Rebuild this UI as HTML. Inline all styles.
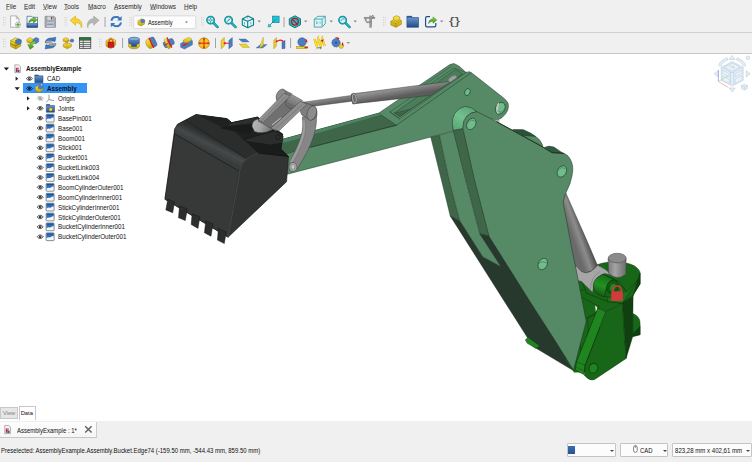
<!DOCTYPE html>
<html lang="en">
<head>
<meta charset="utf-8">
<title>AssemblyExample - FreeCAD</title>
<style>
html,body{margin:0;padding:0;}
body{width:752px;height:462px;overflow:hidden;background:#fff;position:relative;font-family:"Liberation Sans",sans-serif;font-size:7px;color:#111;-webkit-font-smoothing:antialiased;}
.abs{position:absolute;}
#chrome{left:0;top:0;width:752px;height:54px;background:#f0f0f0;}
#menubar span{background:linear-gradient(#707070,#707070) 0 7.9px no-repeat;position:absolute;top:1.6px;line-height:9px;font-size:7px;color:#262626;white-space:nowrap;transform:scaleX(0.915);transform-origin:0 50%;}

.hline{position:absolute;left:0;width:752px;height:1px;background:#d0d0d0;}
.grip{position:absolute;width:2px;height:12px;background-image:radial-gradient(circle,#bdbdbd 0.5px,transparent 0.7px);background-size:2px 2px;}
.vsep{position:absolute;width:1px;height:12px;background:#8c8c8c;}
.dd{position:absolute;width:0;height:0;border-left:2px solid transparent;border-right:2px solid transparent;border-top:2px solid #777;}
#tree .row{position:absolute;left:0;height:10px;line-height:10px;font-size:7px;white-space:nowrap;color:#111;}
#tree .row span{position:absolute;top:0.6px;}
#tree .tn{font-style:normal;display:inline-block;font-size:7.1px;transform:scaleX(0.885);transform-origin:0 50%;}
#tree .tb{font-weight:bold;display:inline-block;font-size:7.1px;transform:scaleX(0.885);transform-origin:0 50%;}
.tri-r{position:absolute;width:0;height:0;border-top:2px solid transparent;border-bottom:2px solid transparent;border-left:3px solid #222;}
.tri-d{position:absolute;width:0;height:0;border-left:2px solid transparent;border-right:2px solid transparent;border-top:3px solid #222;}
#bottom{left:0;top:421px;width:752px;height:41px;background:#f0f0f0;}
.sbox{position:absolute;top:443px;height:14px;background:#fcfcfc;border:0.5px solid #c4c4c4;border-radius:1px;box-sizing:border-box;}
</style>
</head>
<body>
<!-- ===== top chrome ===== -->
<div id="chrome" class="abs">
  <div id="menubar">
    <span style="left:5.5px;background-size:4.28px 0.6px">File</span>
    <span style="left:23.5px;background-size:4.67px 0.6px">Edit</span>
    <span style="left:42.5px;background-size:4.67px 0.6px">View</span>
    <span style="left:64px;background-size:4.28px 0.6px">Tools</span>
    <span style="left:87.5px;background-size:5.83px 0.6px">Macro</span>
    <span style="left:114px;background-size:4.67px 0.6px">Assembly</span>
    <span style="left:149.5px;background-size:6.6px 0.6px">Windows</span>
    <span style="left:184px;background-size:5.05px 0.6px">Help</span>
  </div>
  <div class="hline" style="top:32px;background:#d0d0d0"></div>
  <div class="hline" style="top:53px;background:#c8c8c8"></div>
  <svg id="tb" class="abs" style="left:0;top:0" width="752" height="54" viewBox="0 0 752 54">
<defs>
  <linearGradient id="gy" x1="0" y1="0" x2="0" y2="1"><stop offset="0" stop-color="#fce94f"/><stop offset="1" stop-color="#c4a000"/></linearGradient>
  <linearGradient id="gb" x1="0" y1="0" x2="0" y2="1"><stop offset="0" stop-color="#729fcf"/><stop offset="1" stop-color="#204a87"/></linearGradient>
  <linearGradient id="gg" x1="0" y1="0" x2="0" y2="1"><stop offset="0" stop-color="#8ae234"/><stop offset="1" stop-color="#3d8c1e"/></linearGradient>
  <path id="dda" d="M0 0h3.4l-1.7 2z"/>
</defs>
<!-- grips -->
<g fill="#cacaca">
  <g id="grip1"><rect x="3" y="17" width="0.8" height="1.2"/><rect x="3" y="19.5" width="0.8" height="1.2"/><rect x="3" y="22" width="0.8" height="1.2"/><rect x="3" y="24.5" width="0.8" height="1.2"/><rect x="4.8" y="17" width="0.8" height="1.2"/><rect x="4.8" y="19.5" width="0.8" height="1.2"/><rect x="4.8" y="22" width="0.8" height="1.2"/><rect x="4.8" y="24.5" width="0.8" height="1.2"/></g>
  <use href="#grip1" x="61.5"/><use href="#grip1" x="126.5"/><use href="#grip1" x="198"/><use href="#grip1" x="380"/>
  <use href="#grip1" y="21.5"/><use href="#grip1" x="96" y="21.5"/>
</g>
<!-- separators -->
<g fill="#9a9a9a">
  <rect x="104.6" y="17" width="0.9" height="10"/><rect x="283.6" y="17" width="0.9" height="10"/>
  <rect x="122.2" y="38" width="0.9" height="10"/><rect x="215" y="38" width="0.9" height="10"/><rect x="290.2" y="38" width="0.9" height="10"/>
</g>
<!-- dropdown arrows -->
<g fill="#8a8a8a">
  <use href="#dda" x="257.5" y="20.5"/><use href="#dda" x="304" y="20.5"/><use href="#dda" x="329.5" y="20.5"/><use href="#dda" x="353.5" y="20.5"/><use href="#dda" x="440" y="20.5"/>
  <use href="#dda" x="346.5" y="42"/>
</g>

<!-- ===== ROW 1 ===== -->
<!-- new -->
<g transform="translate(10,15.5)">
  <path d="M0.6 0.4h5.6l2.8 2.8v8.6h-8.4z" fill="#fafafa" stroke="#8a8a8a" stroke-width="0.6"/>
  <path d="M6.2 0.4v2.8h2.8z" fill="#d8d8d8" stroke="#8a8a8a" stroke-width="0.4"/>
  <circle cx="8" cy="9.2" r="2.6" fill="#fff" stroke="#555" stroke-width="0.4"/>
  <path d="M8 7.4v3.6M6.2 9.2h3.6" stroke="#3d9a1e" stroke-width="1.1"/>
</g>
<!-- open -->
<g transform="translate(26.5,15.5)">
  <path d="M0.5 0.8h4.5l1 1h5v10h-10.5z" fill="#eef3f8" stroke="#204a87" stroke-width="0.6"/>
  <path d="M0.5 8h10.5v3.8h-10.5z" fill="url(#gb)" stroke="#204a87" stroke-width="0.5"/>
  <path d="M2.2 7.6c0.2-3 2-4.6 4.8-4.6v-1.6l3.6 3-3.6 3v-1.8c-2-0.2-3.6 0.4-4.8 2z" fill="url(#gg)" stroke="#2d6a12" stroke-width="0.4"/>
</g>
<!-- save (disabled) -->
<g transform="translate(44.5,15.5)">
  <path d="M0.5 0.8h9l1.5 1.5v9.5h-10.5z" fill="#a9aeb3" stroke="#7c8186" stroke-width="0.6"/>
  <rect x="2.6" y="1" width="6" height="3.6" fill="#d6d9dc" stroke="#8a8f94" stroke-width="0.3"/>
  <rect x="6.4" y="1.4" width="1.4" height="2.6" fill="#55595e"/>
  <rect x="2" y="6.4" width="7.6" height="5.2" fill="#c9ccd0" stroke="#8a8f94" stroke-width="0.3"/>
  <rect x="2.6" y="8" width="6.4" height="1.6" fill="#7f9bbd"/>
</g>
<!-- undo -->
<g transform="translate(69.5,15.5)">
  <path d="M0.6 4.8l5.4-4.2v2.6c3.6 0 6.2 2.2 6.4 6.6 0 1-0.2 1.8-0.6 2.4 0-3.4-2-5.2-5.8-5v2.6z" fill="#f6d32d" stroke="#c4a000" stroke-width="0.5" stroke-linejoin="round"/>
</g>
<!-- redo (disabled) -->
<g transform="translate(86.5,15.5)">
  <path d="M12.6 4.8l-5.4-4.2v2.6c-3.6 0-6.2 2.2-6.4 6.6 0 1 0.2 1.8 0.6 2.4 0-3.4 2-5.2 5.8-5v2.6z" fill="#b4b4b4" stroke="#9a9a9a" stroke-width="0.5" stroke-linejoin="round"/>
</g>
<!-- refresh -->
<g transform="translate(110,15.5)" fill="none" stroke="#3a78c0" stroke-width="2" stroke-linecap="butt">
  <path d="M1.4 5.2c0.6-2.6 3-4 5.6-3.6 1.2 0.2 2 0.8 2.8 1.6"/>
  <path d="M11 7c-0.6 2.6-3 4-5.6 3.6-1.2-0.2-2-0.8-2.8-1.6"/>
  <path d="M11.6 0.6v4.4h-4.4z" fill="#3a78c0" stroke="none"/>
  <path d="M0.8 11.8v-4.4h4.4z" fill="#3a78c0" stroke="none"/>
</g>
<!-- workbench combobox -->
<rect x="133.700" y="15.900" width="62" height="12.700" rx="1.200" fill="#fdfdfd" stroke="#c2c2c2" stroke-width="0.500"/>
<g transform="translate(137.5,18.3)">
  <path d="M0.4 2.4l3.2-2 3.6 1.4v3.8l-3.4 2.2-3.4-1.6z" fill="url(#gy)" stroke="#8f7400" stroke-width="0.4"/>
  <path d="M3.2 1.6l2-0.8 1.8 0.8v2l-1.8 1-2-0.9z" fill="#4a7fc4" stroke="#204a87" stroke-width="0.3"/>
</g>
<text x="148" y="24.6" font-family="Liberation Sans, sans-serif" font-size="6.500" fill="#111" textLength="24.600" lengthAdjust="spacingAndGlyphs">Assembly</text>
<path d="M185 21.4h3l-1.5 1.8z" fill="#777"/>
<!-- zoom fit -->
<g transform="translate(206,15.5)">
  <path d="M7.4 7.4l4.2 4.2" stroke="#0a7f8a" stroke-width="2.4" stroke-linecap="round"/>
  <path d="M7.4 7.4l4.2 4.2" stroke="#19c4d4" stroke-width="1.2" stroke-linecap="round"/>
  <circle cx="4.6" cy="4.6" r="3.7" fill="#d6f4f7" stroke="#0a7f8a" stroke-width="1.5"/>
  <circle cx="4.6" cy="4.6" r="3.7" fill="none" stroke="#19c4d4" stroke-width="0.6"/>
  <path d="M4.6 2v5.2M2 4.6h5.2" stroke="#0a7f8a" stroke-width="0.7"/>
  <circle cx="4.6" cy="4.6" r="1.1" fill="#eee" stroke="#0a7f8a" stroke-width="0.4"/>
</g>
<!-- zoom sel -->
<g transform="translate(224,15.5)">
  <path d="M7.4 7.4l4.2 4.2" stroke="#0a7f8a" stroke-width="2.4" stroke-linecap="round"/>
  <path d="M7.4 7.4l4.2 4.2" stroke="#19c4d4" stroke-width="1.2" stroke-linecap="round"/>
  <circle cx="4.6" cy="4.6" r="3.7" fill="#d6f4f7" stroke="#0a7f8a" stroke-width="1.5"/>
  <circle cx="4.6" cy="4.6" r="3.7" fill="none" stroke="#19c4d4" stroke-width="0.6"/>
  <path d="M3 6.2l3.2-3.2" stroke="#444" stroke-width="0.9"/>
</g>
<!-- iso cube -->
<g transform="translate(241.5,15.5)" fill="none" stroke="#0a7f8a" stroke-width="1.1" stroke-linejoin="round">
  <path d="M0.8 3.4l5.6-2.8 5.6 2.6v6.2l-5.8 2.8-5.4-2.6z" fill="#e6f7f8"/>
  <path d="M0.8 3.4l5.4 2.4 5.8-2.6M6.2 5.8v6.4"/>
  <path d="M3 9v-2.4M9.4 9v-2.4M6.2 3.2v-1.6" stroke-width="0.6"/>
</g>
<!-- bounding box -->
<g transform="translate(267.5,15.5)">
  <rect x="5" y="0.6" width="6.6" height="6.6" fill="#19c4d4" stroke="#0a7f8a" stroke-width="0.6"/>
  <path d="M8 4l-6 6" stroke="#0a7f8a" stroke-width="0.8"/>
  <path d="M0.6 11.6l0.6-3.2 2.6 2.6z" fill="#19c4d4" stroke="#0a7f8a" stroke-width="0.4"/>
</g>
<!-- draw style: hex w/ no-entry -->
<g transform="translate(288.5,15.5)">
  <path d="M6.4 0.3l5.6 3v6l-5.6 3-5.6-3v-6z" fill="#19c4d4" stroke="#0a6f78" stroke-width="0.9"/>
  <circle cx="6.4" cy="6.3" r="3.4" fill="none" stroke="#c01818" stroke-width="1.3"/>
  <path d="M4 3.9l4.8 4.8" stroke="#c01818" stroke-width="1.3"/>
</g>
<!-- cube light -->
<g transform="translate(313.5,15.5)" fill="none" stroke="#2a9aa4" stroke-width="0.8" stroke-linejoin="round">
  <path d="M0.8 3.6l3.6-2.8h7.4v7.4l-3.2 3.4h-7.8z" fill="#dff3f5"/>
  <path d="M0.8 3.6h7.8v7.4M8.6 3.6l3.2-2.8"/>
  <path d="M3 8.4v-2.4l1.6 1.2zM6.6 8.4v-2.4" stroke-width="0.5"/>
</g>
<!-- zoom w/ doc -->
<g transform="translate(338,15.5)">
  <path d="M7.4 7.4l4.2 4.2" stroke="#0a7f8a" stroke-width="2.4" stroke-linecap="round"/>
  <path d="M7.4 7.4l4.2 4.2" stroke="#19c4d4" stroke-width="1.2" stroke-linecap="round"/>
  <circle cx="4.6" cy="4.6" r="3.7" fill="#d6f4f7" stroke="#0a7f8a" stroke-width="1.5"/>
  <circle cx="4.6" cy="4.6" r="3.7" fill="none" stroke="#19c4d4" stroke-width="0.6"/>
  <path d="M2.8 5.6c0.8-2 2.2-2.4 3.8-2.2" stroke="#0a7f8a" stroke-width="0.8" fill="none"/>
</g>
<!-- measure caliper -->
<g transform="translate(363,15.5)" fill="#9a9d9a" stroke="#6e716e" stroke-width="0.3">
  <rect x="1" y="1.6" width="11" height="1.6"/><rect x="6.6" y="0.4" width="2.2" height="11.6"/><rect x="3.6" y="6" width="5" height="1.4"/>
  <path d="M2 3.2v2.4h1.4v-2.4z"/><rect x="9.6" y="0.2" width="1.2" height="3"/>
</g>
<!-- part (yellow) -->
<g transform="translate(390,15.5)">
  <path d="M3.4 1.6l3-1.4 3.4 1.4v2.6l1.6 0.8v3.8l-5.4 3-5.2-2.4v-3.6l2.6-1.4z" fill="url(#gy)" stroke="#8f7400" stroke-width="0.5" stroke-linejoin="round"/>
  <path d="M3.4 4.4l3 1.4 3.4-1.6M0.8 5.8l5.2 2.4 5.4-3M6 8.2v3.6" fill="none" stroke="#8f7400" stroke-width="0.4"/>
</g>
<!-- folder (blue) -->
<g transform="translate(406.5,15.5)">
  <path d="M0.4 0.8h4.8l0.8 1.2h6v9.8h-11.6z" fill="url(#gb)" stroke="#204a87" stroke-width="0.6"/>
  <path d="M0.4 0.8h4.8l0.8 1.2h-5.6z" fill="#204a87"/>
</g>
<!-- export -->
<g transform="translate(425,15.5)">
  <path d="M5 1.2h-3c-0.8 0-1.4 0.6-1.4 1.4v7.4c0 0.8 0.6 1.4 1.4 1.4h7.4c0.8 0 1.4-0.6 1.4-1.4v-2.4" fill="#f2f5f9" stroke="#204a87" stroke-width="1.2"/>
  <path d="M3.6 8.2c0-3 1.6-4.8 4.4-4.8v-2l3.8 3.2-3.8 3.2v-2c-2 0-3.4 0.8-4.4 2.4z" fill="url(#gg)" stroke="#2d6a12" stroke-width="0.4"/>
</g>
<text x="448.8" y="25.4" font-family="Liberation Sans, sans-serif" font-size="11" fill="#4c4c4c" textLength="11.6" lengthAdjust="spacingAndGlyphs">{}</text>

<!-- ===== ROW 2 ===== -->
<!-- assembly -->
<g transform="translate(10,37)">
  <path d="M0.600 3.600l4.800-2.800 5.400 2.200v6l-5 3-5.200-2.600z" fill="url(#gy)" stroke="#8f7400" stroke-width="0.500" stroke-linejoin="round"/>
  <path d="M0.600 6.600l5.200 2.400 5-2.800" fill="none" stroke="#7a6200" stroke-width="0.700"/>
  <path d="M0.600 3.600l5.200 2.400 5-3M5.800 6v6" fill="none" stroke="#8f7400" stroke-width="0.400"/>
  <path d="M5.600 3.400l2.600-1.600 3 1.200v3l-2.800 1.600-2.800-1.300z" fill="#4a7fc4" stroke="#204a87" stroke-width="0.400"/>
  <path d="M5.600 3.400l2.800 1.300 2.800-1.700" fill="none" stroke="#204a87" stroke-width="0.300"/>
</g>
<!-- insert link -->
<g transform="translate(26.5,37)">
  <path d="M0.400 2.400l2.800-1.800 3 1.200v3l-2.800 1.600-3-1.400z" fill="url(#gy)" stroke="#8f7400" stroke-width="0.400"/>
  <path d="M6.600 2.600l2.600-2 3 1v3.200l-2.800 1.800-2.800-1.200z" fill="#4a7fc4" stroke="#204a87" stroke-width="0.400"/>
  <path d="M3.400 8c0.600-2.600 2.600-4 5.600-3.800l0.600 2.200c-2.200-0.200-3.400 0.600-4 2.400l1.800 0.600-3.800 2.800-2.400-4.800z" fill="url(#gg)" stroke="#2d6a12" stroke-width="0.400"/>
</g>
<!-- solve -->
<g transform="translate(44.5,37)">
  <path d="M0.600 5.600c0.400-3.200 3.200-5 6.400-4.600l4.400-0.800-0.800 4.400c-2.600-1.200-5-0.800-6.400 1z" fill="#3a78c0" stroke="#204a87" stroke-width="0.400"/>
  <path d="M11.400 6.600c-0.400 3.200-3.200 5-6.400 4.600l-4.400 0.800 0.800-4.400c2.600 1.200 5 0.800 6.400-1z" fill="#3a78c0" stroke="#204a87" stroke-width="0.400"/>
  <path d="M1 4l5.800-0.600 1 1.200-0.400 1.200-5.800 0.400z" fill="#d8dadc" stroke="#44474a" stroke-width="0.300"/>
  <path d="M4.400 6.800l5.800-0.600 1 1.200-0.400 1.200-5.800 0.400z" fill="#d8dadc" stroke="#44474a" stroke-width="0.300"/>
  <path d="M1 5.200l5.800-0.400M4.400 8l5.800-0.400" stroke="#55585b" stroke-width="0.700"/>
</g>
<!-- exploded view -->
<g transform="translate(62,37)">
  <path d="M1.200 7.200l4-1.800 4.200 1.600v2.600l-4 2.200-4.200-2z" fill="url(#gy)" stroke="#8f7400" stroke-width="0.4"/>
  <path d="M1.200 2l2.600-1.400 2.800 1.200v2.200l-2.600 1.400-2.800-1.200z" fill="url(#gy)" stroke="#8f7400" stroke-width="0.4"/>
  <circle cx="10" cy="3.600" r="1.700" fill="#4a7fc4" stroke="#204a87" stroke-width="0.4"/>
  <path d="M5.400 4.200l3.200-0.400M5 5.200v2.400" stroke="#cc2222" stroke-width="0.5"/>
</g>
<!-- BOM table -->
<g transform="translate(79,37)">
  <rect x="0.600" y="0.800" width="11.200" height="10.800" fill="#eeeeec" stroke="#2e3436" stroke-width="0.700"/>
  <rect x="0.600" y="0.800" width="11.200" height="2.400" fill="#2a7a3a" stroke="#2e3436" stroke-width="0.500"/>
  <path d="M0.600 5.400h11.200M0.600 7.600h11.200M0.600 9.600h11.200" stroke="#2e3436" stroke-width="0.700"/>
  <path d="M4.200 3.200v8.400" stroke="#2e3436" stroke-width="0.600"/>
</g>
<!-- toggle grounded -->
<g transform="translate(105,37)">
  <path d="M1 4l4.600-3.200 5 2.400v4.800l-4.800 3.600-4.800-2.600z" fill="url(#gy)" stroke="#8f7400" stroke-width="0.500" stroke-linejoin="round"/>
  <rect x="3" y="5" width="6" height="5.400" fill="#d01a1a" stroke="#8a0e0e" stroke-width="0.400"/>
  <path d="M4.200 5v-1.400c0-2 3.600-2 3.600 0v1.400" fill="none" stroke="#d01a1a" stroke-width="1"/>
</g>
<!-- fixed joint -->
<g transform="translate(128,37)">
  <path d="M0.600 6.400h10.800v3.400c-2 2.600-8.800 2.600-10.800 0z" fill="url(#gy)" stroke="#8f7400" stroke-width="0.500"/>
  <path d="M0.600 1.800c2-2 8.800-2 10.800 0v4c0 1-2 1.400-2.800 1.400v2.200h-5.200v-2.200c-0.800 0-2.800-0.400-2.800-1.400z" fill="url(#gb)" stroke="#204a87" stroke-width="0.500"/>
  <ellipse cx="6" cy="1.900" rx="5.200" ry="1.300" fill="#8fb4dd" stroke="#204a87" stroke-width="0.300"/>
</g>
<!-- revolute -->
<g transform="translate(145,37)">
  <g transform="rotate(-25 6 6)">
    <rect x="6" y="1" width="5" height="10" rx="2" fill="#4a7fc4" stroke="#204a87" stroke-width="0.400"/>
    <ellipse cx="4.200" cy="6" rx="3.200" ry="5" fill="url(#gy)" stroke="#8f7400" stroke-width="0.400"/>
    <rect x="5.600" y="0.400" width="1.500" height="11.200" fill="#dd1c1c"/>
  </g>
</g>
<!-- cylindrical -->
<g transform="translate(162.500,37)">
  <g transform="rotate(-25 6 6)">
    <rect x="0.800" y="3" width="10.800" height="6.400" rx="2" fill="#4a7fc4" stroke="#204a87" stroke-width="0.400"/>
    <rect x="3.200" y="0.800" width="2.600" height="10.600" rx="1" fill="url(#gy)" stroke="#8f7400" stroke-width="0.300"/>
    <rect x="6.200" y="0.400" width="1.500" height="11.200" fill="#dd1c1c"/>
    <path d="M1.400 6.200h4" stroke="#dd1c1c" stroke-width="1"/>
  </g>
</g>
<!-- slider -->
<g transform="translate(180,37)">
  <path d="M0.600 6.600l8-4.400 3.800 1.600v4l-8 4.200-3.800-1.800z" fill="#4a7fc4" stroke="#204a87" stroke-width="0.400"/>
  <path d="M3.400 3l5-2.600 3 1.200v2l-5 2.800-3-1.400z" fill="url(#gy)" stroke="#8f7400" stroke-width="0.400"/>
  <path d="M3 8.600l4.600-2.400" stroke="#dd1c1c" stroke-width="1.100"/>
  <path d="M2 9l2.200-2 0.600 1.800z" fill="#dd1c1c"/>
</g>
<!-- ball -->
<g transform="translate(198,37)">
  <circle cx="6" cy="6.200" r="5.400" fill="#f2c81e" stroke="#9a6a00" stroke-width="0.600"/>
  <path d="M6 1.400v9.600M1.200 6.200h9.600" stroke="#dd1c1c" stroke-width="1"/>
  <path d="M6 0.800l1.300 1.800h-2.600zM6 11.600l1.300-1.800h-2.600zM0.600 6.200l1.800-1.300v2.600zM11.400 6.200l-1.800-1.300v2.600z" fill="#dd1c1c"/>
</g>
<!-- distance -->
<g transform="translate(220.500,37)">
  <path d="M0.600 3.400l3.200-2.800v8.400l-3.200 2.800z" fill="#f2d22a" stroke="#8f7400" stroke-width="0.400"/>
  <path d="M8.400 3.400l3.400-2.800v8.400l-3.400 2.800z" fill="#4a7fc4" stroke="#204a87" stroke-width="0.400"/>
  <path d="M3.600 6.200h5" stroke="#dd1c1c" stroke-width="1"/>
  <path d="M2.800 6.200l2.200-1.500v3z" fill="#dd1c1c"/>
</g>
<!-- parallel -->
<g transform="translate(238,37)">
  <path d="M0.800 2h7l3.400 3h-7z" fill="#4a7fc4" stroke="#204a87" stroke-width="0.300"/>
  <path d="M1.200 7h7l3.400 3.400h-7z" fill="#f2d22a" stroke="#8f7400" stroke-width="0.300"/>
</g>
<!-- perpendicular -->
<g transform="translate(255.500,37)">
  <path d="M0.600 11l4.400-3.400h6.600l-4.400 3.400z" fill="#4a7fc4" stroke="#204a87" stroke-width="0.300"/>
  <path d="M3.800 9.600l3.400-9v8l-3.400 3z" fill="#f2d22a" stroke="#8f7400" stroke-width="0.300" transform="translate(0.600,-0.400)"/>
</g>
<!-- angle -->
<g transform="translate(273,37)">
  <path d="M0.800 3.400l2.600-2.800v8.400l-2.600 2.800z" fill="#f2d22a" stroke="#8f7400" stroke-width="0.400"/>
  <path d="M9 5l3 -1.600v8l-3 0.400z" fill="#4a7fc4" stroke="#204a87" stroke-width="0.400"/>
  <path d="M3.600 4.600c2.400-2 5.400-2 7 0.200" fill="none" stroke="#dd1c1c" stroke-width="1.100"/>
  <path d="M2.600 5.600l0.400-2.600 2 1.800z" fill="#dd1c1c"/>
</g>
<!-- rack pinion -->
<g transform="translate(296,37)">
  <rect x="0.600" y="9.400" width="11" height="2.200" fill="#f2d22a" stroke="#8f7400" stroke-width="0.400"/>
  <circle cx="6" cy="5" r="4.200" fill="#4a7fc4" stroke="#204a87" stroke-width="0.500"/>
  <path d="M9.400 1.400c1.400 0.800 2.200 2.400 2 4l-1.800-0.600z" fill="#dd1c1c"/>
  <path d="M8.400 10.500h3.400" stroke="#dd1c1c" stroke-width="1.200"/>
</g>
<!-- screw -->
<g transform="translate(313.500,37)">
  <path d="M0.800 2l2.400 7 1.600-7 2.400 7 1.600-7 2.400 7" fill="none" stroke="#d4aa00" stroke-width="2.200" stroke-linejoin="miter"/>
  <path d="M0.800 2l2.400 7 1.600-7 2.400 7 1.600-7 2.400 7" fill="none" stroke="#f6dc3a" stroke-width="1.6" stroke-linejoin="miter"/>
  <path d="M7 3.400l3-1.200-0.600 3z" fill="#dd1c1c"/>
  <path d="M4 10.800h3.200" stroke="#3a78c0" stroke-width="1"/><path d="M8.200 10.800l-1.600-1.200v2.400z" fill="#3a78c0"/>
</g>
<!-- gears -->
<g transform="translate(331,37)">
  <circle cx="5" cy="5.800" r="4.200" fill="#4a7fc4" stroke="#204a87" stroke-width="0.600" stroke-dasharray="1.200 0.600"/>
  <circle cx="5" cy="5.800" r="1" fill="#204a87"/>
  <circle cx="10.200" cy="9.200" r="2.200" fill="#f2d22a" stroke="#8f7400" stroke-width="0.400"/>
  <path d="M4 0.600c1.600-0.600 3.400-0.200 4.600 0.800l-1.400 1.200z" fill="#dd1c1c"/>
  <path d="M11 5c1.200 1 1.800 2.600 1.400 4l-1.400-0.800z" fill="#dd1c1c"/>
</g>
</svg>
</div>

<!-- ===== 3D view ===== -->
<svg id="view3d" class="abs" style="left:0;top:0" width="752" height="462" viewBox="0 0 752 462">
<!--BOOM-->
<defs>
<linearGradient id="cyl1" gradientUnits="userSpaceOnUse" x1="400" y1="84" x2="402" y2="96"><stop offset="0" stop-color="#787878"/><stop offset="0.3" stop-color="#949494"/><stop offset="1" stop-color="#5c5c5c"/></linearGradient>
<linearGradient id="cyl2" gradientUnits="userSpaceOnUse" x1="572" y1="236" x2="586" y2="231"><stop offset="0" stop-color="#6a6a6a"/><stop offset="0.45" stop-color="#8c8c8c"/><stop offset="1" stop-color="#444"/></linearGradient>
<linearGradient id="bev" gradientUnits="userSpaceOnUse" x1="212" y1="138" x2="206" y2="150"><stop offset="0" stop-color="#2e3030"/><stop offset="0.5" stop-color="#464949"/><stop offset="1" stop-color="#393c3c"/></linearGradient>
<linearGradient id="pin" gradientUnits="userSpaceOnUse" x1="608" y1="0" x2="626" y2="0"><stop offset="0" stop-color="#7a7a7a"/><stop offset="0.4" stop-color="#a4a4a4"/><stop offset="1" stop-color="#6c6c6c"/></linearGradient>
<linearGradient id="slv" gradientUnits="userSpaceOnUse" x1="296" y1="96" x2="290" y2="108"><stop offset="0" stop-color="#989898"/><stop offset="1" stop-color="#666"/></linearGradient>
<linearGradient id="boss" gradientUnits="userSpaceOnUse" x1="252" y1="124" x2="268" y2="130"><stop offset="0" stop-color="#b6b6b6"/><stop offset="0.5" stop-color="#a8a8a8"/><stop offset="1" stop-color="#808080"/></linearGradient>
<linearGradient id="bossg" gradientUnits="userSpaceOnUse" x1="600" y1="276" x2="594" y2="292"><stop offset="0" stop-color="#1a751a"/><stop offset="0.5" stop-color="#229222"/><stop offset="1" stop-color="#166116"/></linearGradient>
<linearGradient id="rodg" gradientUnits="userSpaceOnUse" x1="325" y1="99" x2="326" y2="105.5"><stop offset="0" stop-color="#8e8e8e"/><stop offset="0.4" stop-color="#767676"/><stop offset="1" stop-color="#5a5a5a"/></linearGradient>
<linearGradient id="earg" gradientUnits="userSpaceOnUse" x1="466" y1="107" x2="455" y2="128"><stop offset="0" stop-color="#62a87b"/><stop offset="0.45" stop-color="#72c28e"/><stop offset="1" stop-color="#5fa878"/></linearGradient>
</defs>
<polygon points="295.8,103.2 352.2,95.3 352.2,101.2 296.7,108.4" fill="url(#rodg)" stroke="#444" stroke-width="0.4" stroke-linejoin="round" />
<polygon points="270,178.7 453.7,131.1 452.7,124.3 455.7,114.5 463.5,111.0 479.0,116.5 497.5,120 501.5,118 505.5,114 507.6,110.5 508.5,106.5 508,103 506,100.2 503,97.5 473.8,74.5 469.8,71.8 465.8,72.2 458.9,66.0 453.9,63.5 449.9,64.5 378.6,113.2 290.0,137.3 270,142.6 270,160" fill="#568a66" stroke="#1d3324" stroke-width="0.5" stroke-linejoin="round" />
<polygon points="290.0,137.3 378.6,113.2 396.5,125.2 311.1,147.1 270,158 270,142.6" fill="#3f6649" stroke="#1d3324" stroke-width="0.4" stroke-linejoin="round" />
<polygon points="270,142.6 290.0,137.3 378.6,113.2 380.9,114.8 291.4,140.8 270,146.2" fill="#4d8360" stroke="none" stroke-width="0" stroke-linejoin="round" />
<polyline points="396.5,125.2 311.1,147.1" fill="none" stroke="#1d3324" stroke-width="0.5" stroke-linejoin="round" stroke-linecap="round"/>
<polygon points="389.9,111.9 399.5,118.8 466,72.6 453.9,68.0" fill="#568a66" stroke="#1d3324" stroke-width="0.4" stroke-linejoin="round" />
<polygon points="394.5,113.0 399.9,116.6 462.8,74 455.4,69.5" fill="#4b7d5b" stroke="#1d3324" stroke-width="0.4" stroke-linejoin="round" />
<polygon points="394.5,113.0 399.9,116.6 412.5,108.6" fill="#3f6649" stroke="#1d3324" stroke-width="0.3" stroke-linejoin="round" />
<polyline points="451.4,66.2 421,87" fill="none" stroke="#1d3324" stroke-width="0.35" stroke-linejoin="round" stroke-linecap="round"/>
<path d="M351.3,94 L449.9,81.4 L456.9,76.5 L449.9,82.4 L431.4,95.2 L352.7,103.9 Z" fill="url(#cyl1)" stroke="#3a3a3a" stroke-width="0.5"/>
<ellipse cx="452.7" cy="78.9" rx="4.6" ry="2.4" fill="#9c9c9c" stroke="none" stroke-width="0" transform="rotate(-32 452.7 78.9)"/>
<ellipse cx="354.2" cy="98.6" rx="2.6" ry="5.3" fill="#707070" stroke="#3c3c3c" stroke-width="0.5" transform="rotate(-7 354.2 98.6)"/>
<ellipse cx="354.4" cy="98.6" rx="1.9" ry="4.5" fill="#6c6c6c" stroke="#cfcfcf" stroke-width="0.6" transform="rotate(-7 354.4 98.6)"/>
<polygon points="399.9,116.6 462.8,74 466,72.6 471.2,72.7 396.5,125.2" fill="#568a66" stroke="none" stroke-width="0" stroke-linejoin="round" />
<polyline points="399.9,116.6 462.8,74" fill="none" stroke="#1d3324" stroke-width="0.45" stroke-linejoin="round" stroke-linecap="round"/>
<polyline points="399.5,118.8 466,72.6" fill="none" stroke="#1d3324" stroke-width="0.35" stroke-linejoin="round" stroke-linecap="round"/>
<polyline points="396.5,125.2 471.2,72.7" fill="none" stroke="#1d3324" stroke-width="0.5" stroke-linejoin="round" stroke-linecap="round"/>
<polyline points="389.9,111.9 399.5,118.8" fill="none" stroke="#1d3324" stroke-width="0.4" stroke-linejoin="round" stroke-linecap="round"/>
<ellipse cx="467.4" cy="92.1" rx="2.6" ry="3.6" fill="#6fbd8b" stroke="#1d3324" stroke-width="0.6" transform="rotate(25 467.4 92.1)"/>
<ellipse cx="500.3" cy="108.3" rx="4.6" ry="6.2" fill="#6fbd8b" stroke="#1d3324" stroke-width="0.6" transform="rotate(28 500.3 108.3)"/>
<path d="M498.6,103.2 Q495.2,107.6 498,113.4 Q496.8,108.2 498.6,103.2 Z" fill="#c4ccc8" stroke="#c4ccc8" stroke-width="1"/>
<polyline points="497.6,110.8 501,112.4 504.2,109.2" fill="none" stroke="#1d3324" stroke-width="0.35" stroke-linejoin="round" stroke-linecap="round"/>
<polygon points="430.7,137.0 439.5,135.0 449.2,180.0 459.9,221.2 450.2,216.0 441.4,180.0" fill="#3f6649" stroke="#1d3324" stroke-width="0.4" stroke-linejoin="round" />
<polygon points="439.5,135.0 454.1,131.2 465.8,180.0 479.9,233.9 501.2,266.9 482.6,256.9 459.9,221.2 449.2,180.0" fill="#568a66" stroke="#1d3324" stroke-width="0.4" stroke-linejoin="round" />
<polygon points="452.9,129.3 463.0,127.7 463.6,131.2 476.5,180.0 491.1,236.5 479.9,233.9 465.8,180.0" fill="#3f6649" stroke="#1d3324" stroke-width="0.4" stroke-linejoin="round" />
<polygon points="450.2,216.0 459.9,221.2 482.6,256.9 501.2,266.9 479.9,233.9 491.1,236.5 530,262 578,350 573.5,370.1 574.5,371.3 533.6,346.7 528,338.5" fill="#27392d" stroke="#141e17" stroke-width="0.4" stroke-linejoin="round" />
<path d="M512.8,129.6 L523.2,129.8 Q531,132.6 536,136.6 Q541.4,140.6 543,146.4 L520,134 Z" fill="#568a66" stroke="#1d3324" stroke-width="0.4"/>
<polygon points="512.8,129.8 523.2,129.7 530.5,133.4 535.6,136.6 523.4,135.8" fill="#2b5237" stroke="#1d3324" stroke-width="0.3" stroke-linejoin="round" />
<polygon points="544.6,147.3 549,146.1 554,147 563.4,153.4 552,152.8" fill="#2f5a3c" stroke="#1d3324" stroke-width="0.4" stroke-linejoin="round" />
<polygon points="452.3,123.7 452.7,118.6 454.9,113.3 458.9,109.0 464.9,106.4 470.9,107.7 476.9,111.7 471.5,113.0 466.9,116.0 463.8,121.3 462.9,128.6 453.2,130.3" fill="url(#earg)" stroke="#1d3324" stroke-width="0.5" stroke-linejoin="round" />
<polygon points="495.2,119.9 497.9,119.4 499.7,121.0 496.8,122.1" fill="#b0b0b0" stroke="#666" stroke-width="0.3" stroke-linejoin="round" />
<!--BASEBACK-->
<polygon points="528.0,337.3 525.3,340.0 527.3,343.3 536.0,348.4 539.9,346.0" fill="#1f861f" stroke="#0a2a0a" stroke-width="0.4" stroke-linejoin="round" />
<polygon points="572,268 590,280 600,300 600,372 574,372.5 566,360" fill="#186618" stroke="none" stroke-width="0" stroke-linejoin="round" />
<polygon points="579.9,290.0 593.9,290.0 608.5,301.3 622.5,303.3 605.9,311.9 597.9,308.0 593.9,315.3 587.2,318.6 588.6,329.9 583.2,351.0 580.6,351.0" fill="#186618" stroke="#0a2a0a" stroke-width="0.4" stroke-linejoin="round" />
<polygon points="595.2,305.3 597.6,308.0 595.9,312.6" fill="#ffffff" stroke="none" stroke-width="0" stroke-linejoin="round" />
<polyline points="581.9,297.3 599.2,306.6" fill="none" stroke="#0a2a0a" stroke-width="0.4" stroke-linejoin="round" stroke-linecap="round"/>
<polyline points="585.9,317.9 594.5,313.9" fill="none" stroke="#0a2a0a" stroke-width="0.4" stroke-linejoin="round" stroke-linecap="round"/>
<path d="M593.9,266.6 C599.9,261.3 623.8,259.9 634.5,265.9 C638.5,268.6 640.1,271.2 640.1,273.2 L640.1,283.9 L632.5,295.9 L622.5,303.3 L607.2,301.3 L586.6,293.2 L581.3,279.9 Z" fill="#186618" stroke="#0a2a0a" stroke-width="0.5"/>
<path d="M640.1,273.2 L640.1,283.9 L632.5,295.9 L622.5,303.3 L633.1,296.6 L637.8,279.9 Z" fill="#0f400f" stroke="#0a2a0a" stroke-width="0.4"/>
<polygon points="607.2,301.3 622.5,303.3 637.8,279.9 626.5,291.9 618.5,279.9 610.5,283.9" fill="#1b731b" stroke="#0a2a0a" stroke-width="0.4" stroke-linejoin="round" />
<path d="M566.0,193.4 L559.2,202.1 L565,240 L568,256 L573.3,266.6 Q585.3,279.9 597.5,265.5 L586.6,240.0 Z" fill="url(#cyl2)" stroke="#333" stroke-width="0.5"/>
<path d="M572.0,265.3 L577.0,266.6 Q585.3,279.9 597.6,265.3 Q605.9,268.6 611.6,275.1 L604.5,273.5 Q593.9,277.2 592.6,292.5 L581.3,281.2 L573.3,279.9 Z" fill="#a6a6a6" stroke="#444" stroke-width="0.5"/>
<path d="M599.9,271.6 Q591.2,276.6 590.3,289.5" fill="none" stroke="#666" stroke-width="0.4"/>
<polygon points="603.2,274.3 615.9,279.9 625.8,290.5 617.2,298.5 603.9,295.9 605.9,283.9" fill="#186618" stroke="#0a2a0a" stroke-width="0.4" stroke-linejoin="round" />
<path d="M593.2,286.5 Q593.2,278.3 602.8,274.3 L613.5,279.4 Q604.9,284.5 604.9,296.9 Q594.8,295.2 593.2,286.5 Z" fill="url(#bossg)" stroke="#0a2a0a" stroke-width="0.5"/>
<ellipse cx="612.5" cy="286.8" rx="5.6" ry="7" fill="#145a14" stroke="#0a2a0a" stroke-width="0.5" transform="rotate(22 612.5 286.8)"/>
<ellipse cx="612.7" cy="287.3" rx="3.2" ry="4.4" fill="#1f861f" stroke="#0a2a0a" stroke-width="0.4" transform="rotate(22 612.7 287.3)"/>
<path d="M608.1,258.4 L608.5,273.2 Q617.2,281.2 625.8,274.3 L626.1,258.4 Z" fill="url(#pin)" stroke="#444" stroke-width="0.5"/>
<ellipse cx="617.2" cy="258.1" rx="9" ry="4.8" fill="#8a8a8a" stroke="#444" stroke-width="0.5"/>
<path d="M612.9,291.9 V289.5 A4.200 4.200 0 0 1 621.2,289.5 V291.9" fill="none" stroke="#d23b3b" stroke-width="1.400"/>
<rect x="611.200" y="291.300" width="11.600" height="9.600" fill="#d23b3b"/>
<!--BOOMFRONT-->
<polygon points="462.9,128.6 463.8,121.3 466.9,116.0 471.5,113.0 476.9,111.7 493.6,120.0 543.3,147.3 551.9,152.6 563.9,153.4 567,155 569.6,158 571.6,161.9 572.6,166 572.8,170 572,176 569.9,183.9 565.2,194.5 563.1,202.1 572,250 576.1,269.5 586.2,321.4 573.5,370.1 554.7,340.0 529,300 507,265 489.1,236.5 474.5,180.0 463.6,131.2" fill="#568a66" stroke="#1d3324" stroke-width="0.5" stroke-linejoin="round" />
<polyline points="497,121.9 543.3,147.3 551.9,152.6 563.9,153.4" fill="none" stroke="#1d3324" stroke-width="1.0" stroke-linejoin="round" stroke-linecap="round"/>
<ellipse cx="471.3" cy="123.9" rx="4.3" ry="6" fill="#6fbd8b" stroke="#1d3324" stroke-width="0.55" transform="rotate(28 471.3 123.9)"/>
<polyline points="467.8,122.9 470.9,119.9 474.5,121.0" fill="none" stroke="#1d3324" stroke-width="0.35" stroke-linejoin="round" stroke-linecap="round"/>
<ellipse cx="561.9" cy="171.4" rx="4.4" ry="6" fill="#6fbd8b" stroke="#1d3324" stroke-width="0.55" transform="rotate(28 561.9 171.4)"/>
<polyline points="558.6,170 561.5,167.6 565,168.4" fill="none" stroke="#1d3324" stroke-width="0.35" stroke-linejoin="round" stroke-linecap="round"/>
<ellipse cx="542.8" cy="264" rx="4.4" ry="6" fill="#6fbd8b" stroke="#1d3324" stroke-width="0.55" transform="rotate(28 542.8 264)"/>
<polyline points="539.1,263.2 542.4,261.7 546.9,262.9" fill="none" stroke="#1d3324" stroke-width="0.35" stroke-linejoin="round" stroke-linecap="round"/>
<!--BASEFRONT-->
<polygon points="597.9,308.0 605.9,311.9 585.2,365.2 583.8,374.5 575.2,369.9 576.5,361.9" fill="#1f861f" stroke="#0a2a0a" stroke-width="0.5" stroke-linejoin="round" />
<polyline points="576.5,361.9 585.2,365.2" fill="none" stroke="#0a2a0a" stroke-width="0.4" stroke-linejoin="round" stroke-linecap="round"/>
<polyline points="575.9,367.2 584.5,370.6" fill="none" stroke="#0a2a0a" stroke-width="0.3" stroke-linejoin="round" stroke-linecap="round"/>
<path d="M605.9,311.9 L622.5,303.3 L626.1,358.4 L594.5,379.5 Q589.1,381.2 584.5,375.2 L585.2,365.2 Z" fill="#186618" stroke="#0a2a0a" stroke-width="0.5"/>
<ellipse cx="593.4" cy="368.2" rx="4.2" ry="5" fill="#1f861f" stroke="#0a2a0a" stroke-width="0.5" transform="rotate(20 593.4 368.2)"/>
<polyline points="590.5,364.8 594.5,363.2 597.1,364.8" fill="none" stroke="#0a2a0a" stroke-width="0.3" stroke-linejoin="round" stroke-linecap="round"/>
<polygon points="622.5,303.3 633.1,296.6 632.9,313.6 632.9,336.0 626.1,358.4" fill="#0f400f" stroke="#0a2a0a" stroke-width="0.4" stroke-linejoin="round" />
<path d="M632.9,313.6 Q640.3,316.5 640.1,323.4 L640.1,334.7 L632.9,336.6 Z" fill="#186618" stroke="#0a2a0a" stroke-width="0.4"/>
<polygon points="640.1,326.3 640.1,334.7 632.9,336.6 632.9,334.1" fill="#0f400f" stroke="#0a2a0a" stroke-width="0.3" stroke-linejoin="round" />
<!--BUCKET-->
<polygon points="174.6,129.2 177.5,124.3 183.4,121.0 196.0,114.6 226.8,118.6 231.7,122.6 257.4,117.1 282.7,134.1 280.7,148.7 288.5,156.5 286.6,181.7 228.1,237.2 164.9,199.2" fill="#323434" stroke="#0e0f0f" stroke-width="0.5" stroke-linejoin="round" />
<polygon points="196.0,114.6 226.8,118.6 231.7,122.6 257.4,117.1 282.7,134.1 280.7,148.7 288.5,156.5 257.4,153.0 246.5,158.8 185.3,120.4" fill="#1e2020" stroke="#0e0f0f" stroke-width="0.4" stroke-linejoin="round" />
<polygon points="196.0,114.6 226.8,118.6 231.7,122.6 231.5,123.0 220.0,127.9 234.9,131.4 243.9,139.9 256.9,151.9 257.4,153.0 246.5,158.8 185.3,120.4" fill="#2b2d2d" stroke="none" stroke-width="0" stroke-linejoin="round" />
<polygon points="198.9,115.4 226.8,118.8 231.5,122.6 221.5,126.9" fill="#1f2121" stroke="none" stroke-width="0" stroke-linejoin="round" />
<polygon points="231.5,123.0 256.9,117.0 259.4,118.5 252.4,123.5 239.9,125.0 225.0,126.9" fill="#2d2f2f" stroke="#0e0f0f" stroke-width="0.3" stroke-linejoin="round" />
<polygon points="220.0,127.9 225.0,126.9 239.9,125.0 251.9,125.0 253.4,130.4 247.9,133.4 234.9,131.1" fill="#191b1b" stroke="none" stroke-width="0" stroke-linejoin="round" />
<polygon points="243.9,139.9 261.9,134.4 274.8,131.1 278.8,132.4 283.3,136.1 282.3,142.9 270.8,144.9 247.9,141.7" fill="#2b2d2d" stroke="#0e0f0f" stroke-width="0.3" stroke-linejoin="round" />
<polygon points="247.9,141.7 270.8,144.9 282.3,142.9 281.3,149.9 288.3,155.9 270.8,153.9 256.9,151.9" fill="#1a1c1c" stroke="none" stroke-width="0" stroke-linejoin="round" />
<ellipse cx="278.1" cy="137.1" rx="2" ry="2.4" fill="#2e3030" stroke="#0a0a0a" stroke-width="0.5"/>
<path d="M252.1,126.5 Q251.9,121.0 257.4,119.3 L272.8,129.4 Q262.9,134.9 254.4,131.4 Z" fill="url(#boss)" stroke="#333" stroke-width="0.4"/>
<polygon points="174.6,134.1 174.6,129.2 177.5,124.3 185.3,120.4 246.5,158.8 242,163.5 239.2,171.2" fill="url(#bev)" stroke="#0e0f0f" stroke-width="0.3" stroke-linejoin="round" />
<polygon points="174.6,134.1 239.2,171.2 228.1,237.2 164.9,199.2" fill="#373838" stroke="#0e0f0f" stroke-width="0.4" stroke-linejoin="round" />
<polygon points="167.8,199.2 174.6,202.1 172.7,212.8 165.8,209.9" fill="#2c2e2e" stroke="#111313" stroke-width="0.45" stroke-linejoin="round" />
<polygon points="179.5,206.0 187.3,208.9 185.3,220.6 178.5,217.7" fill="#2c2e2e" stroke="#111313" stroke-width="0.45" stroke-linejoin="round" />
<polygon points="192.1,213.8 199.9,216.7 198.0,228.4 191.2,224.5" fill="#2c2e2e" stroke="#111313" stroke-width="0.45" stroke-linejoin="round" />
<polygon points="205.8,221.0 213.0,224.1 211.0,236.2 204.4,232.7" fill="#2c2e2e" stroke="#111313" stroke-width="0.45" stroke-linejoin="round" />
<polygon points="218.4,228.4 226.2,231.9 224.3,243.6 217.4,240.1" fill="#2c2e2e" stroke="#111313" stroke-width="0.45" stroke-linejoin="round" />
<polyline points="257.4,153.0 288.5,156.5" fill="none" stroke="#0e0f0f" stroke-width="0.4" stroke-linejoin="round" stroke-linecap="round"/>
<polyline points="258,152.8 246.5,158.8 242.2,163.5 239.8,170 238.6,178 228.1,237.2" fill="none" stroke="#5e6262" stroke-width="0.55" stroke-linejoin="round" stroke-linecap="round"/>
<path d="M302.4,116.9 C304.4,129.9 300.9,141.9 289.1,163.1 L289.5,169.9 L297.3,168.9 C313.9,141.9 316.9,129.9 316.5,114.0 Z" fill="#868686" stroke="#3c3c3c" stroke-width="0.5"/>
<path d="M302.4,118.9 C304.4,129.9 300.9,141.9 289.1,163.1 L293.0,162.1 C304.4,141.9 307.1,129.9 305.1,119.9 Z" fill="#9c9c9c" stroke="#555" stroke-width="0.3"/>
<ellipse cx="293.0" cy="167.0" rx="4" ry="4.6" fill="#a6a6a6" stroke="#3c3c3c" stroke-width="0.5"/>
<ellipse cx="293.0" cy="167.0" rx="2" ry="2.4" fill="#c8c8c8" stroke="#555" stroke-width="0.4"/>
<polygon points="287.9,95.0 303.8,102.9 275.9,130.9 258.0,121.1" fill="#707070" stroke="#3c3c3c" stroke-width="0.4" stroke-linejoin="round" />
<polyline points="272.4,124.7 280.9,117.9" fill="none" stroke="#f4f4f4" stroke-width="0.7" stroke-linejoin="round" stroke-linecap="round"/>
<polyline points="280.9,117.9 289.9,110.9" fill="none" stroke="#5a5a5a" stroke-width="0.4" stroke-linejoin="round" stroke-linecap="round"/>
<polygon points="282.4,89.2 291.9,93.8 288.9,100.9 279.4,102.1" fill="#7a7a7a" stroke="#3c3c3c" stroke-width="0.4" stroke-linejoin="round" />
<ellipse cx="281.1" cy="95.7" rx="4.6" ry="6.8" fill="#8a8a8a" stroke="#3c3c3c" stroke-width="0.5" transform="rotate(22 281.1 95.7)"/>
<path d="M291.1,94.0 L302.6,100.5 L298.3,107.4 L294.9,109.4 Q286.9,108.9 285.4,103.9 Q286.4,98.0 291.1,94.0 Z" fill="url(#slv)" stroke="#3c3c3c" stroke-width="0.4"/>
<path d="M287.4,102.9 Q291.9,106.4 297.9,106.9" fill="none" stroke="#4a4a4a" stroke-width="0.4"/>
<path d="M303.3,101.9 L314.3,106.4 Q317.8,109.9 316.8,115.9 Q313.8,120.9 309.8,119.9 L301.8,114.9 Q298.3,109.9 303.3,101.9 Z" fill="#7e7e7e" stroke="#3c3c3c" stroke-width="0.5"/>
<ellipse cx="311.8" cy="113.1" rx="4.5" ry="7.4" fill="#8c8c8c" stroke="#3c3c3c" stroke-width="0.5" transform="rotate(18 311.8 113.1)"/>
<polygon points="283.9,93.5 290.4,95.8 263.0,122.4 258.0,119.9" fill="#8f8f8f" stroke="#3c3c3c" stroke-width="0.4" stroke-linejoin="round" />
<polygon points="300.3,101.4 307.0,104.1 278.9,130.9 270.7,128.4" fill="#8f8f8f" stroke="#3c3c3c" stroke-width="0.4" stroke-linejoin="round" />
<polyline points="301.8,104.9 274.9,129.4" fill="none" stroke="#5a5a5a" stroke-width="0.4" stroke-linejoin="round" stroke-linecap="round"/>
<polyline points="285.9,96.5 261.0,121.4" fill="none" stroke="#5a5a5a" stroke-width="0.4" stroke-linejoin="round" stroke-linecap="round"/>
<!--NAV-->
<g id="navcube" stroke="#aebbc8" stroke-width="0.45" fill="#e3f0fb" stroke-linejoin="round">
  <path d="M732.2 61.6l11 5.700v13l-11 5.700-11-5.700v-13z"/>
  <path d="M732.2 63.2l8.100 3.900-8.100 4.100-8.100-4.100z" fill="#e9f3fc"/>
  <path d="M721.200 67.300l9.400 4.800v12.600M743.200 67.300l-9.400 4.800v12.600M730.600 72.100l1.600 0.800 1.600-0.800" fill="none"/>
  <path d="M722.400 70.200l6.800 3.500v3l-6.800-3.500zM722.400 75.800l6.800 3.500v4.200l-6.800-3.500z" fill="#e9f3fc" stroke-width="0.35"/>
  <path d="M742 70.200l-6.800 3.500v3l6.800-3.500zM742 75.800l-6.800 3.500v4.200l6.800-3.500z" fill="#e9f3fc" stroke-width="0.35"/>
  <path d="M729.400 66.200h3.400l1.600 1.400h-2.600" fill="none" stroke-width="0.5"/>
  <path d="M732.200 55.400l3 4h-6z"/>
  <path d="M732.200 92l3-4h-6z"/>
  <path d="M714.200 73.800l4-3.200v6.400z"/>
  <path d="M750.200 73.800l-4-3.200v6.400z"/>
  <path d="M718.600 65.200c1.400-3.600 4.600-6.200 8.800-7.400l0.400 2.200c-3.200 1-5.400 3-6.600 5.600l-1.600 0.600z"/>
  <path d="M745.800 65.200c-1.400-3.600-4.600-6.200-8.800-7.400l-0.400 2.200c3.200 1 5.400 3 6.600 5.600l1.600 0.600z"/>
  <circle cx="747.900" cy="57.800" r="1.800"/>
  <path d="M744.400 84.400l3 1.200v3l-3 1.400-3-1.400v-3z"/>
  <path d="M741.400 85.600l3 1.400 3-1.400M744.400 87v3" fill="none" stroke-width="0.400"/>
</g>
<path d="M718.400 70v11.400" stroke="#8080f0" stroke-width="0.600"/>
<path d="M718.600 81.400l9.800-5.400" stroke="#80dc80" stroke-width="0.500"/>
<path d="M718.600 81.600l9.800 5.800" stroke="#f08080" stroke-width="0.600"/>

</svg>

<!-- ===== tree ===== -->
<div id="tree" class="abs" style="left:0;top:0;width:140px;height:250px">
<div class="abs" style="left:22.5px;top:83.21px;width:64.8px;height:9.9px;background:#3394f6"></div>
<div class="row" style="top:63.75px"><span style="left:25.5px"><b class="tb">AssemblyExample</b></span></div>
<div class="row" style="top:73.63px"><span style="left:47px"><i class="tn">CAD</i></span></div>
<div class="row" style="top:83.51px"><span style="left:47px"><b class="tb">Assembly</b></span></div>
<div class="row" style="top:93.40px"><span style="left:58px"><i class="tn">Origin</i></span></div>
<div class="row" style="top:103.28px"><span style="left:58px"><i class="tn">Joints</i></span></div>
<div class="row" style="top:113.16px"><span style="left:58px"><i class="tn">BasePin001</i></span></div>
<div class="row" style="top:123.04px"><span style="left:58px"><i class="tn">Base001</i></span></div>
<div class="row" style="top:132.92px"><span style="left:58px"><i class="tn">Boom001</i></span></div>
<div class="row" style="top:142.81px"><span style="left:58px"><i class="tn">Stick001</i></span></div>
<div class="row" style="top:152.69px"><span style="left:58px"><i class="tn">Bucket001</i></span></div>
<div class="row" style="top:162.57px"><span style="left:58px"><i class="tn">BucketLink003</i></span></div>
<div class="row" style="top:172.45px"><span style="left:58px"><i class="tn">BucketLink004</i></span></div>
<div class="row" style="top:182.33px"><span style="left:58px"><i class="tn">BoomCylinderOuter001</i></span></div>
<div class="row" style="top:192.22px"><span style="left:58px"><i class="tn">BoomCylinderInner001</i></span></div>
<div class="row" style="top:202.10px"><span style="left:58px"><i class="tn">StickCylinderInner001</i></span></div>
<div class="row" style="top:211.98px"><span style="left:58px"><i class="tn">StickCylinderOuter001</i></span></div>
<div class="row" style="top:221.86px"><span style="left:58px"><i class="tn">BucketCylinderInner001</i></span></div>
<div class="row" style="top:231.74px"><span style="left:58px"><i class="tn">BucketCylinderOuter001</i></span></div>
<svg class="abs" style="left:0;top:0" width="140" height="250" viewBox="0 0 140 250">
<defs><linearGradient id="gy2" x1="0" y1="0" x2="0" y2="1"><stop offset="0" stop-color="#fce94f"/><stop offset="1" stop-color="#c4a000"/></linearGradient></defs>
<path d="M3.800 67.45h5.200l-2.600 3z" fill="#1a1a1a"/>
<g transform="translate(14.500,64.55)"><path d="M0.300 0.300h3.800l1.800 1.800v6h-5.600z" fill="#f6f6f6" stroke="#666" stroke-width="0.500"/><path d="M1.300 3.200h3v1h-1.800v0.800h1.400v0.900h-1.400v1.600h-1.200z" fill="#d22"/><path d="M2.800 5.200h2.200v2.400h-2.200z" fill="#2a5db0"/></g>
<path d="M15.600 76.53v4.200l2.700-2.100z" fill="#222"/>
<g transform="translate(26.4,78.63)"><path d="M0 0c1.500-2.300 4.500-2.300 6 0c-1.500 2.300-4.500 2.300-6 0z" fill="#fff" stroke="#1e1e1e" stroke-width="0.750"/><circle cx="3" cy="0" r="1.300" fill="#1e1e1e"/><circle cx="3" cy="-0.100" r="0.450" fill="#fff"/></g>
<g transform="translate(34.500,74.43)"><path d="M0.300 0.500h3.400l0.600 0.900h4.200v6.800h-8.200z" fill="url(#gb)" stroke="#204a87" stroke-width="0.500"/><path d="M0.300 0.500h3.400l0.600 0.900h-4z" fill="#204a87"/></g>
<path d="M14.600 87.21h5.200l-2.600 3z" fill="#1a1a1a"/>
<g transform="translate(26.400,88.51)"><path d="M0 0c1.500-2.300 4.500-2.300 6 0c-1.500 2.300-4.500 2.300-6 0z" fill="#3394f6" stroke="#111" stroke-width="0.800"/><circle cx="3" cy="0" r="1.300" fill="#111"/></g>
<g transform="translate(35,84.31)"><path d="M0.300 2.600l3.400-2 4.200 1.400v3.800l-3.600 2.400-4-1.800z" fill="url(#gy)" stroke="#8f7400" stroke-width="0.400"/><path d="M3.200 1.600l2.200-1.200 2.600 1v2.400l-2.400 1.200-2.400-1z" fill="#4a7fc4" stroke="#204a87" stroke-width="0.300"/><path d="M5.600 0l2.200 0.400-1.600 1.200z" fill="#f6f6f6" stroke="#666" stroke-width="0.200"/></g>
<path d="M27 96.30v4.200l2.700-2.100z" fill="#222"/>
<g transform="translate(37.2,98.40)"><path d="M0 0c1.500-2.300 4.500-2.300 6 0c-1.500 2.300-4.500 2.300-6 0z" fill="#fff" stroke="#9a9a9a" stroke-width="0.750"/><circle cx="3" cy="0" r="1.300" fill="#9a9a9a"/><circle cx="3" cy="-0.100" r="0.450" fill="#fff"/><path d="M0.400 -2.200l5.200 4.400" stroke="#9a9a9a" stroke-width="0.600"/></g>
<g transform="translate(46,94.20)" stroke="#6e6e6e" stroke-width="0.700" fill="none"><path d="M3 0.400v5l-2.800 2.400M3 5.400l5 1"/></g>
<path d="M27 106.18v4.200l2.700-2.100z" fill="#222"/>
<g transform="translate(37.2,108.28)"><path d="M0 0c1.500-2.300 4.500-2.300 6 0c-1.500 2.300-4.500 2.300-6 0z" fill="#fff" stroke="#1e1e1e" stroke-width="0.750"/><circle cx="3" cy="0" r="1.300" fill="#1e1e1e"/><circle cx="3" cy="-0.100" r="0.450" fill="#fff"/></g>
<g transform="translate(46,104.08)"><path d="M0.300 0.500h3.400l0.600 0.900h4.200v6.800h-8.200z" fill="url(#gb)" stroke="#204a87" stroke-width="0.500"/><path d="M0.300 0.500h3.400l0.600 0.900h-4z" fill="#204a87"/><path d="M3 4.600l1.600-1 1.800 0.800v1.800l-1.600 1-1.800-0.800z" fill="#f2d22a" stroke="#8f7400" stroke-width="0.300"/></g>
<g transform="translate(37.2,118.16)"><path d="M0 0c1.500-2.300 4.500-2.300 6 0c-1.500 2.300-4.500 2.300-6 0z" fill="#fff" stroke="#1e1e1e" stroke-width="0.750"/><circle cx="3" cy="0" r="1.300" fill="#1e1e1e"/><circle cx="3" cy="-0.100" r="0.450" fill="#fff"/></g>
<g transform="translate(45.8,113.96)"><rect x="0.300" y="0.300" width="8" height="7.800" rx="0.800" fill="#f4f6f8" stroke="#3c4650" stroke-width="0.600"/><path d="M0.600 0.600h7.400v3.200c-1.600-1.200-3.200 1.400-4.400 1-1.200-0.400-2 0-3 0.800z" fill="#2f6eb5"/><path d="M1 0.900h6.600v0.900h-6.600z" fill="#174a8a"/></g>
<g transform="translate(37.2,128.04)"><path d="M0 0c1.500-2.300 4.500-2.300 6 0c-1.500 2.300-4.500 2.300-6 0z" fill="#fff" stroke="#1e1e1e" stroke-width="0.750"/><circle cx="3" cy="0" r="1.300" fill="#1e1e1e"/><circle cx="3" cy="-0.100" r="0.450" fill="#fff"/></g>
<g transform="translate(45.8,123.84)"><rect x="0.300" y="0.300" width="8" height="7.800" rx="0.800" fill="#f4f6f8" stroke="#3c4650" stroke-width="0.600"/><path d="M0.600 0.600h7.400v3.200c-1.600-1.200-3.200 1.400-4.400 1-1.200-0.400-2 0-3 0.800z" fill="#2f6eb5"/><path d="M1 0.900h6.600v0.900h-6.600z" fill="#174a8a"/></g>
<g transform="translate(37.2,137.92)"><path d="M0 0c1.500-2.300 4.500-2.300 6 0c-1.500 2.300-4.500 2.300-6 0z" fill="#fff" stroke="#1e1e1e" stroke-width="0.750"/><circle cx="3" cy="0" r="1.300" fill="#1e1e1e"/><circle cx="3" cy="-0.100" r="0.450" fill="#fff"/></g>
<g transform="translate(45.8,133.72)"><rect x="0.300" y="0.300" width="8" height="7.800" rx="0.800" fill="#f4f6f8" stroke="#3c4650" stroke-width="0.600"/><path d="M0.600 0.600h7.400v3.200c-1.600-1.200-3.200 1.400-4.400 1-1.200-0.400-2 0-3 0.800z" fill="#2f6eb5"/><path d="M1 0.900h6.600v0.900h-6.600z" fill="#174a8a"/></g>
<g transform="translate(37.2,147.81)"><path d="M0 0c1.500-2.300 4.500-2.300 6 0c-1.500 2.300-4.500 2.300-6 0z" fill="#fff" stroke="#1e1e1e" stroke-width="0.750"/><circle cx="3" cy="0" r="1.300" fill="#1e1e1e"/><circle cx="3" cy="-0.100" r="0.450" fill="#fff"/></g>
<g transform="translate(45.8,143.61)"><rect x="0.300" y="0.300" width="8" height="7.800" rx="0.800" fill="#f4f6f8" stroke="#3c4650" stroke-width="0.600"/><path d="M0.600 0.600h7.400v3.200c-1.600-1.200-3.200 1.400-4.400 1-1.200-0.400-2 0-3 0.800z" fill="#2f6eb5"/><path d="M1 0.900h6.600v0.900h-6.600z" fill="#174a8a"/></g>
<g transform="translate(37.2,157.69)"><path d="M0 0c1.500-2.300 4.500-2.300 6 0c-1.500 2.300-4.500 2.300-6 0z" fill="#fff" stroke="#1e1e1e" stroke-width="0.750"/><circle cx="3" cy="0" r="1.300" fill="#1e1e1e"/><circle cx="3" cy="-0.100" r="0.450" fill="#fff"/></g>
<g transform="translate(45.8,153.49)"><rect x="0.300" y="0.300" width="8" height="7.800" rx="0.800" fill="#f4f6f8" stroke="#3c4650" stroke-width="0.600"/><path d="M0.600 0.600h7.400v3.200c-1.600-1.200-3.200 1.400-4.400 1-1.200-0.400-2 0-3 0.800z" fill="#2f6eb5"/><path d="M1 0.900h6.600v0.900h-6.600z" fill="#174a8a"/></g>
<g transform="translate(37.2,167.57)"><path d="M0 0c1.500-2.300 4.500-2.300 6 0c-1.500 2.300-4.500 2.300-6 0z" fill="#fff" stroke="#1e1e1e" stroke-width="0.750"/><circle cx="3" cy="0" r="1.300" fill="#1e1e1e"/><circle cx="3" cy="-0.100" r="0.450" fill="#fff"/></g>
<g transform="translate(45.8,163.37)"><rect x="0.300" y="0.300" width="8" height="7.800" rx="0.800" fill="#f4f6f8" stroke="#3c4650" stroke-width="0.600"/><path d="M0.600 0.600h7.400v3.200c-1.600-1.200-3.200 1.400-4.400 1-1.200-0.400-2 0-3 0.800z" fill="#2f6eb5"/><path d="M1 0.900h6.600v0.900h-6.600z" fill="#174a8a"/></g>
<g transform="translate(37.2,177.45)"><path d="M0 0c1.500-2.300 4.500-2.300 6 0c-1.500 2.300-4.500 2.300-6 0z" fill="#fff" stroke="#1e1e1e" stroke-width="0.750"/><circle cx="3" cy="0" r="1.300" fill="#1e1e1e"/><circle cx="3" cy="-0.100" r="0.450" fill="#fff"/></g>
<g transform="translate(45.8,173.25)"><rect x="0.300" y="0.300" width="8" height="7.800" rx="0.800" fill="#f4f6f8" stroke="#3c4650" stroke-width="0.600"/><path d="M0.600 0.600h7.400v3.200c-1.600-1.200-3.200 1.400-4.400 1-1.200-0.400-2 0-3 0.800z" fill="#2f6eb5"/><path d="M1 0.900h6.600v0.900h-6.600z" fill="#174a8a"/></g>
<g transform="translate(37.2,187.33)"><path d="M0 0c1.500-2.300 4.500-2.300 6 0c-1.500 2.300-4.500 2.300-6 0z" fill="#fff" stroke="#1e1e1e" stroke-width="0.750"/><circle cx="3" cy="0" r="1.300" fill="#1e1e1e"/><circle cx="3" cy="-0.100" r="0.450" fill="#fff"/></g>
<g transform="translate(45.8,183.13)"><rect x="0.300" y="0.300" width="8" height="7.800" rx="0.800" fill="#f4f6f8" stroke="#3c4650" stroke-width="0.600"/><path d="M0.600 0.600h7.400v3.200c-1.600-1.200-3.200 1.400-4.400 1-1.200-0.400-2 0-3 0.800z" fill="#2f6eb5"/><path d="M1 0.900h6.600v0.900h-6.600z" fill="#174a8a"/></g>
<g transform="translate(37.2,197.22)"><path d="M0 0c1.500-2.300 4.500-2.300 6 0c-1.500 2.300-4.500 2.300-6 0z" fill="#fff" stroke="#1e1e1e" stroke-width="0.750"/><circle cx="3" cy="0" r="1.300" fill="#1e1e1e"/><circle cx="3" cy="-0.100" r="0.450" fill="#fff"/></g>
<g transform="translate(45.8,193.02)"><rect x="0.300" y="0.300" width="8" height="7.800" rx="0.800" fill="#f4f6f8" stroke="#3c4650" stroke-width="0.600"/><path d="M0.600 0.600h7.400v3.200c-1.600-1.200-3.200 1.400-4.400 1-1.200-0.400-2 0-3 0.800z" fill="#2f6eb5"/><path d="M1 0.900h6.600v0.900h-6.600z" fill="#174a8a"/></g>
<g transform="translate(37.2,207.10)"><path d="M0 0c1.500-2.300 4.500-2.300 6 0c-1.500 2.300-4.500 2.300-6 0z" fill="#fff" stroke="#1e1e1e" stroke-width="0.750"/><circle cx="3" cy="0" r="1.300" fill="#1e1e1e"/><circle cx="3" cy="-0.100" r="0.450" fill="#fff"/></g>
<g transform="translate(45.8,202.90)"><rect x="0.300" y="0.300" width="8" height="7.800" rx="0.800" fill="#f4f6f8" stroke="#3c4650" stroke-width="0.600"/><path d="M0.600 0.600h7.400v3.200c-1.600-1.200-3.200 1.400-4.400 1-1.200-0.400-2 0-3 0.800z" fill="#2f6eb5"/><path d="M1 0.900h6.600v0.900h-6.600z" fill="#174a8a"/></g>
<g transform="translate(37.2,216.98)"><path d="M0 0c1.500-2.300 4.500-2.300 6 0c-1.500 2.300-4.500 2.300-6 0z" fill="#fff" stroke="#1e1e1e" stroke-width="0.750"/><circle cx="3" cy="0" r="1.300" fill="#1e1e1e"/><circle cx="3" cy="-0.100" r="0.450" fill="#fff"/></g>
<g transform="translate(45.8,212.78)"><rect x="0.300" y="0.300" width="8" height="7.800" rx="0.800" fill="#f4f6f8" stroke="#3c4650" stroke-width="0.600"/><path d="M0.600 0.600h7.400v3.200c-1.600-1.200-3.200 1.400-4.400 1-1.200-0.400-2 0-3 0.800z" fill="#2f6eb5"/><path d="M1 0.900h6.600v0.900h-6.600z" fill="#174a8a"/></g>
<g transform="translate(37.2,226.86)"><path d="M0 0c1.500-2.300 4.500-2.300 6 0c-1.500 2.300-4.500 2.300-6 0z" fill="#fff" stroke="#1e1e1e" stroke-width="0.750"/><circle cx="3" cy="0" r="1.300" fill="#1e1e1e"/><circle cx="3" cy="-0.100" r="0.450" fill="#fff"/></g>
<g transform="translate(45.8,222.66)"><rect x="0.300" y="0.300" width="8" height="7.800" rx="0.800" fill="#f4f6f8" stroke="#3c4650" stroke-width="0.600"/><path d="M0.600 0.600h7.400v3.200c-1.600-1.200-3.200 1.400-4.400 1-1.200-0.400-2 0-3 0.800z" fill="#2f6eb5"/><path d="M1 0.900h6.600v0.900h-6.600z" fill="#174a8a"/></g>
<g transform="translate(37.2,236.74)"><path d="M0 0c1.500-2.300 4.500-2.300 6 0c-1.500 2.300-4.500 2.300-6 0z" fill="#fff" stroke="#1e1e1e" stroke-width="0.750"/><circle cx="3" cy="0" r="1.300" fill="#1e1e1e"/><circle cx="3" cy="-0.100" r="0.450" fill="#fff"/></g>
<g transform="translate(45.8,232.54)"><rect x="0.300" y="0.300" width="8" height="7.800" rx="0.800" fill="#f4f6f8" stroke="#3c4650" stroke-width="0.600"/><path d="M0.600 0.600h7.400v3.200c-1.600-1.200-3.200 1.400-4.400 1-1.200-0.400-2 0-3 0.800z" fill="#2f6eb5"/><path d="M1 0.900h6.600v0.900h-6.600z" fill="#174a8a"/></g>
</svg>
</div>

<!-- ===== bottom ===== -->
<div id="bottom" class="abs"></div>
<!-- property tabs -->
<div class="abs" style="left:0;top:407px;width:18px;height:12px;background:#e6e6e6;border:0.5px solid #c8c8c8;box-sizing:border-box"></div>
<div class="abs" style="left:3px;top:408.500px;font-size:5.700px;line-height:9px;color:#808080">View</div>
<div class="abs" style="left:18.500px;top:405.500px;width:17.500px;height:14px;background:#fff;border:0.5px solid #c8c8c8;border-bottom:none;box-sizing:border-box"></div>
<div class="abs" style="left:20.700px;top:409.200px;font-size:5.800px;line-height:9px;color:#111">Data</div>
<!-- document tab -->
<div class="abs" style="left:0;top:421.500px;width:97px;height:16.200px;background:linear-gradient(#fdfdfd,#f6f6f6);border-right:1px solid #cdcdcd;border-bottom:1px solid #c6c6c6;box-sizing:border-box"></div>
<svg class="abs" style="left:4px;top:425px" width="8" height="10" viewBox="0 0 8 10"><path d="M0.800 0.400h3.800l1.800 1.800v6.400h-5.600z" fill="#f6f6f6" stroke="#666" stroke-width="0.500"/><path d="M1.800 3.400h3v1h-1.800v0.800h1.400v0.900h-1.400v1.700h-1.200z" fill="#d22"/><path d="M3.300 5.500h2.200v2.500h-2.200z" fill="#2a5db0"/></svg>
<div class="abs" style="left:17px;top:425.500px;font-size:6.700px;line-height:9px;color:#111;white-space:nowrap;transform:scaleX(0.895);transform-origin:0 50%">AssemblyExample : 1*</div>
<svg class="abs" style="left:83.800px;top:424.900px" width="9" height="9" viewBox="0 0 9 9"><path d="M1.200 1.200l6.400 6.400M7.600 1.200l-6.400 6.400" stroke="#636363" stroke-width="1.450"/></svg>
<!-- status bar -->
<div class="abs" style="left:1px;top:445.500px;font-size:6.600px;line-height:9px;color:#111;white-space:nowrap;transform:scaleX(0.907);transform-origin:0 50%">Preselected: AssemblyExample.Assembly.Bucket.Edge74 (-159.50 mm, -544.43 mm, 859.50 mm)</div>
<div class="sbox" style="left:566.500px;width:49.500px"></div>
<div class="abs" style="left:568px;top:445.500px;width:7px;height:8.500px;background:linear-gradient(#3a6fb5,#27528f)"></div>
<div class="dd" style="left:609.500px;top:449.500px;border-top-color:#444"></div>
<div class="sbox" style="left:619.500px;width:48.500px"></div>
<svg class="abs" style="left:633px;top:445px" width="5" height="9" viewBox="0 0 5 9"><rect x="0.600" y="0.600" width="3.600" height="6.800" rx="1.800" fill="#fff" stroke="#333" stroke-width="0.600"/><path d="M2.400 0.600v2.400" stroke="#333" stroke-width="0.500"/></svg>
<div class="abs" style="left:640px;top:445.500px;font-size:6.600px;line-height:9px;color:#111;transform:scaleX(0.9);transform-origin:0 50%">CAD</div>
<div class="dd" style="left:662.500px;top:449.500px;border-top-color:#444"></div>
<div class="sbox" style="left:672px;width:80px"></div>
<div class="abs" style="left:674.800px;top:445.500px;font-size:6.600px;line-height:9px;color:#111;white-space:nowrap;transform:scaleX(0.921);transform-origin:0 50%">823,28 mm x 402,61 mm</div>
<div class="dd" style="left:745.800px;top:449.500px;border-top-color:#444"></div>
</body>
</html>
